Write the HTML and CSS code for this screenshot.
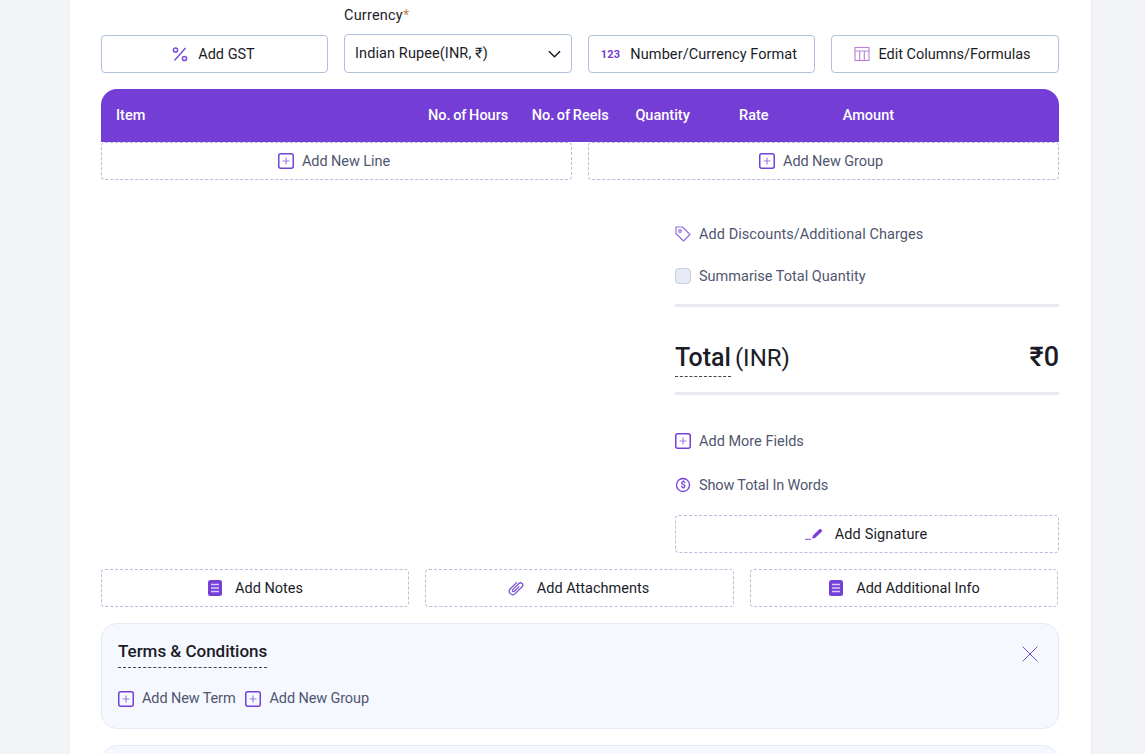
FILE: index.html
```html
<!DOCTYPE html>
<html lang="en">
<head>
  <meta charset="UTF-8" />
  <meta name="viewport" content="width=device-width, initial-scale=1.0"/>
  <title>Invoice Items</title>
  <link rel="stylesheet" href="styles.css">
</head>
<body>

  <div class="sheet">

    <div class="top-row">
      <button class="btn btn-gst"><svg class="icon" viewBox="0 0 16 16" fill="none" stroke="#7c4fd6" stroke-width="1.5"><circle cx="3.5" cy="4" r="2.1"/><circle cx="12.5" cy="12.5" r="2.1"/><path d="M13.5 2 2.5 14.5"/></svg>Add GST</button>
      <div class="field">
        <label class="field-label">Currency<span class="req">*</span></label>
        <div class="select">
          <span>Indian Rupee(INR, ₹)</span>
          <svg class="chevron" viewBox="0 0 14 8" fill="none" stroke="#1c1c28" stroke-width="1.6"><path d="M1 1l6 6 6-6"/></svg>
        </div>
      </div>
      <button class="btn btn-num"><span class="num-icon">123</span>Number/Currency Format</button>
      <button class="btn btn-cols"><svg class="icon" viewBox="0 0 16 16" fill="none" stroke="#b583d8" stroke-width="1.1"><rect x="1" y="1.5" width="14" height="13"/><path d="M1 5h14M5.7 5v9.5M10.3 5v9.5"/></svg>Edit Columns/Formulas</button>
    </div>

    <div class="table-head">
      <div class="col-item">Item</div>
      <div class="col">No. of Hours</div>
      <div class="col">No. of Reels</div>
      <div class="col">Quantity</div>
      <div class="col">Rate</div>
      <div class="col">Amount</div>
    </div>
    <div class="add-row">
      <button class="dashed muted"><svg class="plus" viewBox="0 0 16 16" fill="none"><rect x="0.75" y="0.75" width="14.5" height="14.5" rx="2" stroke="#7540d8" stroke-width="1.5"/><path d="M8 4.5v7M4.5 8h7" stroke="#a27fe0" stroke-width="1.2"/></svg>Add New Line</button>
      <button class="dashed muted"><svg class="plus" viewBox="0 0 16 16" fill="none"><rect x="0.75" y="0.75" width="14.5" height="14.5" rx="2" stroke="#7540d8" stroke-width="1.5"/><path d="M8 4.5v7M4.5 8h7" stroke="#a27fe0" stroke-width="1.2"/></svg>Add New Group</button>
    </div>

    <div class="summary">
      <div class="link-row first"><svg class="plus" viewBox="0 0 16 16" fill="none" stroke="#9470dc" stroke-width="1.2"><path d="M1 1h6.5l7.5 7.5-6.5 6.5L1 7.5z" stroke-linejoin="round"/><circle cx="5" cy="5" r="1.3"/></svg>Add Discounts/Additional Charges</div>
      <div class="link-row check-row"><span class="checkbox"></span>Summarise Total Quantity</div>
      <div class="total-row">
        <div class="total-label"><span class="total-word">Total</span><span class="total-cur">(INR)</span></div>
        <div class="total-value">₹0</div>
      </div>
      <div class="link-row more"><svg class="plus" viewBox="0 0 16 16" fill="none"><rect x="0.75" y="0.75" width="14.5" height="14.5" rx="2" stroke="#7540d8" stroke-width="1.5"/><path d="M8 4.5v7M4.5 8h7" stroke="#a27fe0" stroke-width="1.2"/></svg>Add More Fields</div>
      <div class="link-row words"><svg class="plus" viewBox="0 0 16 16" fill="none"><circle cx="8" cy="8" r="6.5" stroke="#7540d8" stroke-width="1.3"/><text x="8" y="11" text-anchor="middle" class="dollar">$</text></svg>Show Total In Words</div>
      <button class="dashed sign"><svg class="sign-icon" viewBox="0 0 18 12" fill="none"><path d="M0 11.3h6" stroke="#7c4fd6" stroke-width="1"/><path d="M7 10.5 8 7.5 14 1.5c.8-.8 1.8-.5 2.5.2s.8 1.5 0 2.3L10 10z" fill="#7c3fd8"/></svg>Add Signature</button>
    </div>

    <div class="extras">
      <button class="dashed"><svg class="icon" viewBox="0 0 14 16"><rect width="14" height="16" rx="2.5" fill="#7540d8"/><path d="M3 4.5h8M3 8h8M3 11.5h8" stroke="#d9c9f5" stroke-width="1.3"/></svg>Add Notes</button>
      <button class="dashed btn-attach"><svg class="icon" viewBox="1 1 14 14" fill="none" stroke="#7c4fd6" stroke-width="1.1"><g transform="rotate(45 8 8)"><path d="M5 4v8a3 3 0 0 0 6 0V3.5a2 2 0 0 0-4 0V11a1 1 0 0 0 2 0V5"/></g></svg>Add Attachments</button>
      <button class="dashed"><svg class="icon" viewBox="0 0 14 16"><rect width="14" height="16" rx="2.5" fill="#7540d8"/><path d="M3 4.5h8M3 8h8M3 11.5h8" stroke="#d9c9f5" stroke-width="1.3"/></svg>Add Additional Info</button>
    </div>

    <div class="card">
      <div class="card-head">
        <h3 class="card-title">Terms &amp; Conditions</h3>
        <svg class="close" viewBox="0 0 16 16" fill="none" stroke="#7c4fd6" stroke-width="1"><path d="M.5.5l15 15M15.5.5l-15 15"/></svg>
      </div>
      <div class="card-links">
        <span class="card-link"><svg class="plus" viewBox="0 0 16 16" fill="none"><rect x="0.75" y="0.75" width="14.5" height="14.5" rx="2" stroke="#7540d8" stroke-width="1.5"/><path d="M8 4.5v7M4.5 8h7" stroke="#a27fe0" stroke-width="1.2"/></svg>Add New Term</span>
        <span class="card-link"><svg class="plus" viewBox="0 0 16 16" fill="none"><rect x="0.75" y="0.75" width="14.5" height="14.5" rx="2" stroke="#7540d8" stroke-width="1.5"/><path d="M8 4.5v7M4.5 8h7" stroke="#a27fe0" stroke-width="1.2"/></svg>Add New Group</span>
      </div>
    </div>

    <div class="card"></div>

  </div>

</body>
</html>
```

FILE: styles.css
```css
:root {
  --purple: #733dd6;
  --line: #b0c0da;
  --dash: #b4c0d8;
  --text: #1c1c28;
  --muted: #50566f;
}

* {
  box-sizing: border-box;
}

body {
  margin: 0;
  height: 100vh;
  overflow: hidden;
  background: #f3f4f8;
  font-family: 'Roboto', 'Liberation Sans', sans-serif;
  font-size: 14.5px;
  color: var(--text);
}

button {
  font: inherit;
  color: inherit;
  cursor: pointer;
}

.sheet {
  width: 1024px;
  margin-left: 69px;
  background: #fff;
  border-right: 2px solid #eceef4;
  border-left: 1px solid #eceef4;
  padding: 0 32px 0 31px;
  height: 100%;
}

.top-row {
  display: grid;
  grid-template-columns: 227px 228px 227px 228px;
  gap: 16px;
  align-items: end;
  padding-top: 7px;
}

.btn {
  height: 38px;
  background: #fff;
  border: 1px solid var(--line);
  border-radius: 4px;
  display: flex;
  align-items: center;
  justify-content: center;
  gap: 10px;
}

.btn-gst {
  padding-right: 8px;
}

.btn-num {
  padding-right: 11px;
  letter-spacing: 0.08px;
}

.btn-cols {
  gap: 8px;
  padding-right: 11px;
}

.icon {
  width: 16px;
  height: 16px;
  flex-shrink: 0;
}

.num-icon {
  font-size: 11px;
  font-weight: 700;
  color: var(--purple);
  letter-spacing: 0.2px;
}

.field-label {
  display: block;
  height: 18px;
  line-height: 18px;
  margin-bottom: 9px;
  font-size: 14.5px;
  letter-spacing: 0.2px;
}

.req {
  color: #c9844f;
}

.select {
  height: 39px;
  border: 1px solid var(--line);
  border-radius: 4px;
  padding: 0 10px;
  display: flex;
  align-items: center;
  justify-content: space-between;
  letter-spacing: 0.1px;
}

.chevron {
  width: 13px;
  height: 8px;
}

.table-head {
  height: 53px;
  margin-top: 16px;
  padding-left: 15px;
  background: var(--purple);
  border-radius: 16px 16px 0 0;
  color: #fff;
  font-weight: 500;
  word-spacing: -1px;
  display: flex;
  align-items: center;
}

.col-item {
  width: 312px;
}

.col {
  width: 103.7px;
}

.add-row {
  display: grid;
  grid-template-columns: 1fr 1fr;
  gap: 16px;
}

.dashed {
  height: 38px;
  background: #fff;
  border: 1px dashed var(--dash);
  border-radius: 4px;
  display: flex;
  align-items: center;
  justify-content: center;
  gap: 12px;
}

.muted {
  color: var(--muted);
  gap: 8px;
  padding-right: 11px;
  letter-spacing: -0.08px;
}

.plus {
  width: 16px;
  height: 16px;
  flex-shrink: 0;
}

.sign-icon {
  width: 18px;
  height: 12px;
  flex-shrink: 0;
}

.dollar {
  font-size: 9px;
  font-weight: 700;
  fill: #7540d8;
}

.summary {
  margin-left: 574px;
  width: 384px;
}

.link-row {
  display: flex;
  align-items: center;
  gap: 8px;
  height: 20px;
  color: var(--muted);
}

.first {
  margin-top: 44px;
  letter-spacing: 0.06px;
}

.check-row {
  margin-top: 22px;
}

.checkbox {
  width: 16px;
  height: 16px;
  background: #e5eaf6;
  border: 1px solid #c3cde2;
  border-radius: 4px;
}

.total-row {
  margin-top: 18px;
  height: 91px;
  padding-top: 20px;
  border-top: 3px solid #e6e8f2;
  border-bottom: 3px solid #e6e8f2;
  display: flex;
  align-items: center;
  justify-content: space-between;
  line-height: 30px;
}

.total-label {
  display: flex;
  align-items: flex-start;
  gap: 4px;
}

.total-word {
  font-weight: 500;
  font-size: 25px;
  padding-bottom: 3px;
  border-bottom: 1px dashed #444;
}

.total-cur {
  font-weight: 400;
  font-size: 24px;
}

.total-value {
  font-weight: 500;
  font-size: 27px;
  padding-bottom: 6px;
}

.more {
  margin-top: 36px;
}

.words {
  margin-top: 24px;
  letter-spacing: -0.15px;
}

.sign {
  width: 100%;
  margin-top: 20px;
  padding-right: 8px;
  letter-spacing: 0.15px;
}

.extras {
  display: grid;
  grid-template-columns: 308px 309px 308px;
  gap: 16px;
  margin-top: 16px;
}

.btn-attach {
  gap: 13px;
  padding-right: 8px;
}

.card {
  height: 106px;
  margin-top: 16px;
  padding: 17px 16px;
  background: #f5f8ff;
  border: 1px solid #e6eaf5;
  border-radius: 16px;
}

.card-head {
  display: flex;
  align-items: flex-start;
  justify-content: space-between;
}

.card-title {
  margin: 0;
  font-size: 17px;
  font-weight: 500;
  letter-spacing: -0.02px;
  line-height: 20px;
  padding-bottom: 6px;
  border-bottom: 1px dashed #444;
}

.close {
  width: 16px;
  height: 16px;
  margin: 5px 4px 0 0;
}

.card-links {
  display: flex;
  gap: 10px;
  margin-top: 22px;
  color: var(--muted);
  letter-spacing: -0.12px;
}

.card-link {
  display: flex;
  align-items: center;
  gap: 8px;
}
```
